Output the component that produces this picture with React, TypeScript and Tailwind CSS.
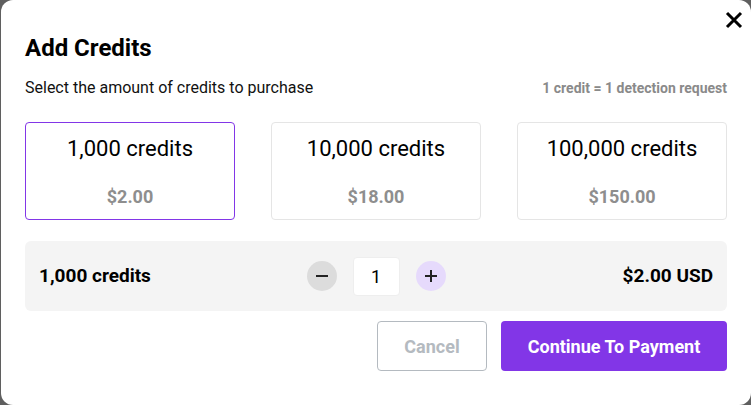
import React from "react";

const options = [
  { credits: "1,000 credits", price: "$2.00" },
  { credits: "10,000 credits", price: "$18.00" },
  { credits: "100,000 credits", price: "$150.00" },
];

const App: React.FC = () => {
  const [selected, setSelected] = React.useState(0);
  const [qty, setQty] = React.useState(1);

  return (
    <div
      className="w-[751px] h-[405px] bg-[#5f5f5f] pl-px overflow-hidden"
      style={{ fontFamily: "Roboto, 'Liberation Sans', sans-serif" }}
    >
      <div className="relative h-full bg-white rounded-xl pl-6 pr-6 pt-[34px]">
        <button className="absolute right-[8px] top-[11px] text-black">
          <svg width="18" height="18" viewBox="0 0 18 18">
            <path d="M2 2 L16 16 M16 2 L2 16" stroke="currentColor" strokeWidth="3" />
          </svg>
        </button>
        <h2 className="text-[24px] font-bold text-black leading-[28px]">Add Credits</h2>
        <div className="flex items-center justify-between mt-[16px] h-[20px]">
          <p className="text-[16px] text-[#111]">Select the amount of credits to purchase</p>
          <p className="text-[14px] font-bold text-[#8a8a8a]">1 credit = 1 detection request</p>
        </div>
        <div className="grid grid-cols-3 gap-9 mt-[24px]">
          {options.map((o, i) => (
            <div
              key={o.credits}
              onClick={() => setSelected(i)}
              className={`h-[98px] rounded border flex flex-col items-center cursor-pointer ${
                i === selected ? "border-[#8236e7]" : "border-[#e5e5e5]"
              }`}
            >
              <span className="text-[22px] text-black mt-[12px] leading-[28px]">{o.credits}</span>
              <span className="text-[18px] font-bold text-[#8e8e8e] mt-[22px] leading-[24px]">{o.price}</span>
            </div>
          ))}
        </div>
        <div className="mt-[21px] h-[70px] bg-[#f4f4f4] rounded-md flex items-center px-[14px]">
          <span className="flex-1 text-[19px] font-bold text-black">{options[selected].credits}</span>
          <div className="flex items-center gap-4">
            <button
              onClick={() => setQty(Math.max(1, qty - 1))}
              className="w-[30px] h-[30px] rounded-full bg-[#dcdcdc] flex items-center justify-center"
            >
              <svg width="14" height="14" viewBox="0 0 14 14">
                <path d="M1 7 H13" stroke="#222" strokeWidth="2" />
              </svg>
            </button>
            <div className="w-[47px] h-[39px] bg-white rounded border border-[#eee] flex items-center justify-center text-[18px] text-black">
              {qty}
            </div>
            <button
              onClick={() => setQty(qty + 1)}
              className="w-[30px] h-[30px] rounded-full bg-[#e6dafc] flex items-center justify-center"
            >
              <svg width="14" height="14" viewBox="0 0 14 14">
                <path d="M1 7 H13 M7 1 V13" stroke="#222" strokeWidth="2" />
              </svg>
            </button>
          </div>
          <span className="flex-1 text-right text-[19px] font-bold text-black">$2.00 USD</span>
        </div>
        <div className="flex justify-end gap-[14px] mt-[10px]">
          <button className="w-[110px] h-[50px] border border-[#b4bac0] rounded text-[18px] font-bold text-[#b4bac0]">
            Cancel
          </button>
          <button className="w-[226px] h-[50px] bg-[#8236e7] rounded text-[18px] font-bold text-white">
            Continue To Payment
          </button>
        </div>
      </div>
    </div>
  );
};

export default App;
